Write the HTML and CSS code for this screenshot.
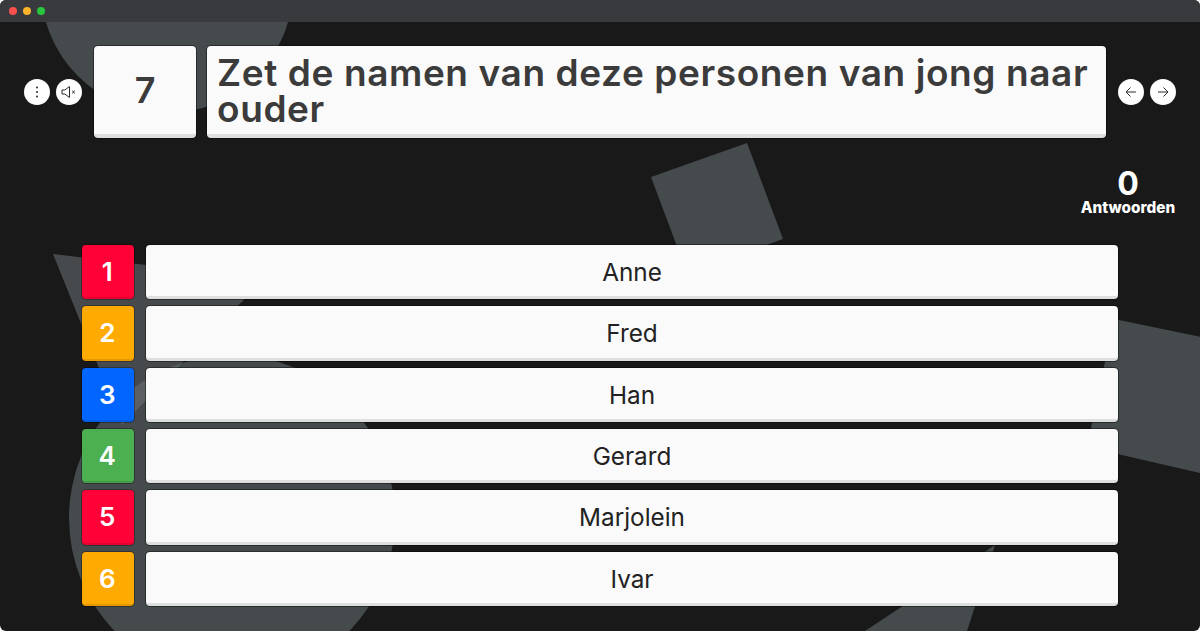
FILE: index.html
```html
<!DOCTYPE html>
<html lang="nl">
<head>
<meta charset="utf-8">
<title>Quiz</title>
<link rel="stylesheet" href="styles.css">
</head>
<body>
<div class="window">
  <div class="titlebar">
    <span class="dot dot-red"></span>
    <span class="dot dot-yellow"></span>
    <span class="dot dot-green"></span>
  </div>
  <main class="stage">
    <svg class="backdrop" viewBox="0 22 1200 609" aria-hidden="true">
      <circle class="shape" cx="167" cy="-13" r="126"/>
      <polygon class="shape" points="651,177 747,143 783,239 687,273"/>
      <circle class="shape" cx="232" cy="518" r="163"/>
      <polygon class="shape-glass" points="53,254 264,279 122,425"/>
      <polygon class="shape" points="1114,319 1260,349 1230,480 1087,447"/>
      <polygon class="shape" points="865,631 995,545 967,631"/>
    </svg>
    <header class="top">
      <div class="tools">
        <button class="round" type="button" aria-label="Menu">
          <svg viewBox="0 0 16 16"><circle cx="8" cy="3.6" r="1"/><circle cx="8" cy="8" r="1"/><circle cx="8" cy="12.4" r="1"/></svg>
        </button>
        <button class="round" type="button" aria-label="Geluid uit">
          <svg viewBox="0 0 18 18" class="line mute"><path d="M2 7h2.8L9.5 3.5v11L4.8 11H2z"/><path d="M12.2 7.8l2.6 2.6M14.8 7.8l-2.6 2.6"/></svg>
        </button>
      </div>
      <div class="card number">7</div>
      <h1 class="card question">Zet de namen van deze personen van jong naar ouder</h1>
      <div class="tools">
        <button class="round" type="button" aria-label="Vorige">
          <svg viewBox="0 0 16 16" class="line"><path d="M13 8H3M7.5 3.5L3 8l4.5 4.5"/></svg>
        </button>
        <button class="round" type="button" aria-label="Volgende">
          <svg viewBox="0 0 16 16" class="line"><path d="M3 8h10M8.5 3.5L13 8l-4.5 4.5"/></svg>
        </button>
      </div>
    </header>
    <section class="score">
      <span class="score-value">0</span>
      <span class="score-label">Antwoorden</span>
    </section>
    <ol class="answers">
      <li class="answer"><span class="badge red">1</span><span class="card option">Anne</span></li>
      <li class="answer"><span class="badge orange">2</span><span class="card option">Fred</span></li>
      <li class="answer"><span class="badge blue">3</span><span class="card option">Han</span></li>
      <li class="answer"><span class="badge green">4</span><span class="card option">Gerard</span></li>
      <li class="answer"><span class="badge red">5</span><span class="card option">Marjolein</span></li>
      <li class="answer"><span class="badge orange">6</span><span class="card option">Ivar</span></li>
    </ol>
  </main>
</div>
</body>
</html>
```
FILE: styles.css
```css
* { box-sizing: border-box; }
html, body { margin: 0; height: 100%; background: #fff; }
body { overflow: hidden; font-family: Inter, "Liberation Sans", sans-serif; }

.window {
  width: 1200px;
  height: 631px;
  display: flex;
  flex-direction: column;
  background: #191919;
  border-radius: 6px;
  overflow: hidden;
}

.titlebar {
  flex: none;
  height: 22px;
  padding-left: 9px;
  display: flex;
  align-items: center;
  gap: 6px;
  background: #393a3d;
}
.dot { width: 8px; height: 8px; border-radius: 50%; }
.dot-red { background: #f9504d; }
.dot-yellow { background: #fdb42b; }
.dot-green { background: #28c53f; }

.stage {
  position: relative;
  flex: 1;
  padding: 24px 24px 0;
}
.backdrop {
  position: absolute;
  inset: 0;
  width: 1200px;
  height: 609px;
}
.shape { fill: #454a4d; }
.shape-glass { fill: #6e7377; fill-opacity: .55; }

.top, .score, .answers { position: relative; }

.top {
  display: flex;
  align-items: center;
  gap: 11px;
  height: 92px;
}
.tools { flex: none; display: flex; gap: 6px; }
.tools:first-child { margin-right: 1px; }
.tools:last-child { margin-left: 1px; }
.round {
  width: 26px;
  height: 26px;
  padding: 0;
  border: 0;
  border-radius: 50%;
  background: #fff;
  display: flex;
  align-items: center;
  justify-content: center;
}
.round svg { width: 16px; height: 16px; fill: #2a2a2a; }
.round .line { fill: none; stroke: #2a2a2a; stroke-width: 1; }
.round .mute { width: 18px; height: 18px; }

.card {
  background: #fafafa;
  border-bottom: 4px solid #dfdfdf;
  border-radius: 4px;
  box-shadow: 0 0 0 1px rgba(0, 0, 0, .4);
  color: #222;
}
.number {
  flex: none;
  width: 102px;
  height: 92px;
  display: flex;
  align-items: center;
  justify-content: center;
  font-size: 36px;
  font-weight: 600;
  color: #3b3b3b;
}
.question {
  flex: 1;
  height: 92px;
  margin: 0;
  padding: 9px 10px 0;
  font-size: 37px;
  font-weight: 600;
  line-height: 36px;
  letter-spacing: .6px;
  color: #3b3b3b;
}

.score {
  display: flex;
  flex-direction: column;
  align-items: center;
  width: 96px;
  margin: 30px 0 0 auto;
  color: #fff;
  font-weight: 700;
}
.score-value { font-size: 32px; line-height: 31px; }
.score-label { margin-top: 1px; font-size: 15.3px; line-height: 16px; font-weight: 800; }

.answers {
  list-style: none;
  margin: 29px 58px 0;
  padding: 0;
  display: flex;
  flex-direction: column;
  gap: 7px;
}
.answer {
  display: flex;
  gap: 12.5px;
  height: 54.33px;
}
.badge {
  flex: none;
  width: 51.5px;
  padding: 1px 1px 0 0;
  display: flex;
  align-items: center;
  justify-content: center;
  border-radius: 4px;
  border-bottom: 2px solid rgba(0, 0, 0, .1);
  box-shadow: 0 0 0 1px rgba(0, 0, 0, .3);
  color: #fff;
  font-size: 26px;
  font-weight: 600;
}
.red { background: #ff0037; }
.orange { background: #ffaa00; }
.blue { background: #0066ff; }
.green { background: #4caf50; }
.option {
  flex: 1;
  padding-top: 3px;
  border-bottom-width: 3px;
  display: flex;
  align-items: center;
  justify-content: center;
  font-size: 24.3px;
  font-weight: 370;
}
```
